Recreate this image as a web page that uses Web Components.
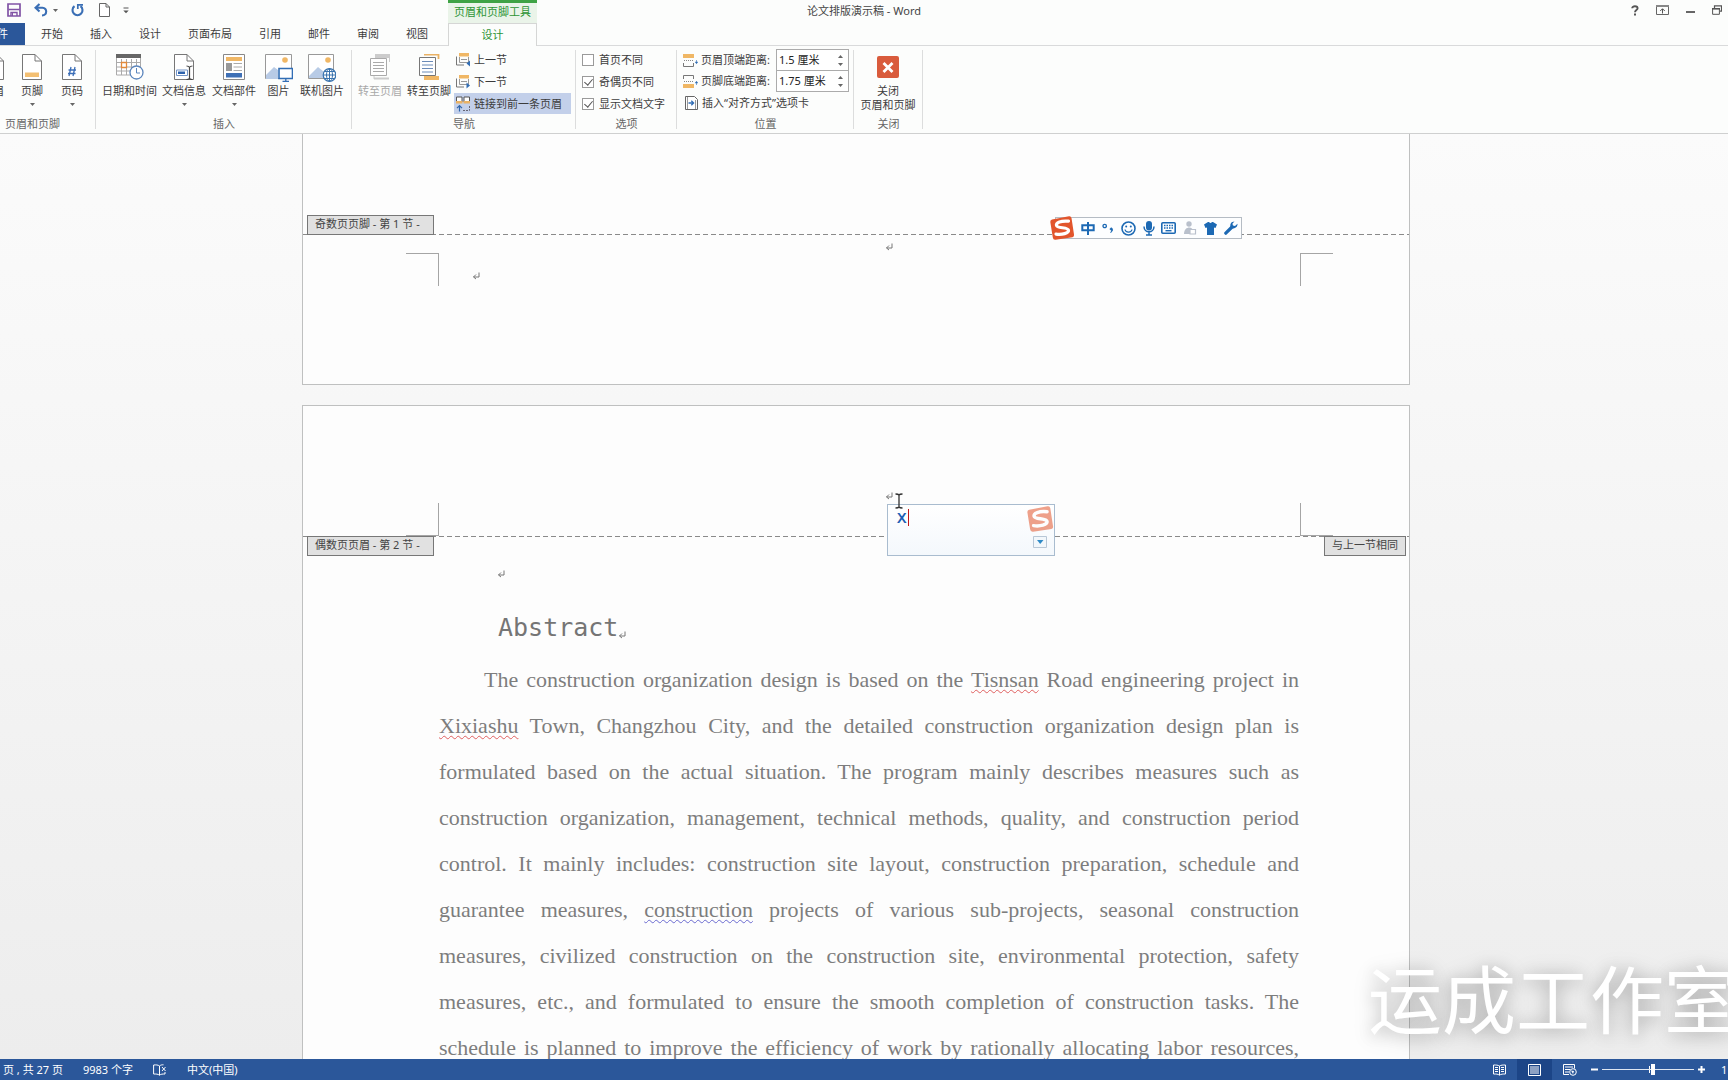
<!DOCTYPE html>
<html lang="zh-CN">
<head>
<meta charset="utf-8">
<title>论文排版演示稿 - Word</title>
<style>
html,body{margin:0;height:100%;overflow:hidden}
body{font:11px/14px "Noto Sans","Noto Sans CJK SC",sans-serif;color:#3c3c3c;background:#fcfdfc}
</style>
</head>
<body>
<word-app></word-app>
<script>
const ICONS = {
save:[14,14,'<path d="M1 1h12v12H1z" fill="none" stroke="#8053a5" stroke-width="1.7"/><path d="M1.5 6.5h11" stroke="#8053a5" stroke-width="1.5"/><path d="M4 13V9.500h6V13" fill="none" stroke="#8053a5" stroke-width="1.4"/><path d="M5.500 10v3" stroke="#8053a5"/>'],
undo:[14,14,'<path d="M5.500 1L1.500 4.800l4 3.800M2 4.800h6.500c5 0 5 7.500-.5 7.700" fill="none" stroke="#3a6fb5" stroke-width="2.100"/>'],
redo:[13,14,'<path d="M9.500 3.200A5 5 0 1 1 3.500 3.200" fill="none" stroke="#3a6fb5" stroke-width="2.100"/><path d="M6.800 6V1.800H12" fill="none" stroke="#3a6fb5" stroke-width="1.700"/>'],
blank:[11,14,'<path d="M.5.5h6.500l3.500 3.500v9.500H.5zM7 .5v3.500h3.500" fill="#fff" stroke="#666"/>'],
custom:[6,7,'<path d="M.5 1h5" stroke="#555"/><path d="M.3 3.500h5.400L3 6.300z" fill="#555"/>'],
down:[5,3,'<path d="M0 0h5L2.500 3z" fill="#666"/>'],
up:[5,3,'<path d="M0 3h5L2.500 0z" fill="#666"/>'],
help:[8,11,'<path d="M1.200 3.200C1.200.5 6.600.5 6.600 3.200c0 1.900-2.600 1.700-2.600 4.100" fill="none" stroke="#555" stroke-width="1.900"/><path d="M3 8.500h2v2H3z" fill="#555"/>'],
ribbonopt:[13,10,'<path d="M.5.5h12v9H.5z" fill="none" stroke="#666"/><path d="M0 0h13v2H0z" fill="#888"/><path d="M6.500 8.500V4M4.200 6l2.300-2.300L8.800 6" fill="none" stroke="#555"/>'],
min:[9,10,'<path d="M0 6h9v2H0z" fill="#666"/>'],
restore:[10,10,'<path d="M2.500 3V.8h7v5.400H8" fill="none" stroke="#555" stroke-width="1.200"/><path d="M.6 3.500h6.800v5.800H.6z" fill="none" stroke="#555"/><path d="M0 3h8v1.600H0z" fill="#555"/>'],
footer:[20,26,'<path d="M.5.5h12.500l6.500 6.500v18.500H.5z" fill="#fff" stroke="#777"/><path d="M13 .5V7h6.500" fill="none" stroke="#777"/><path d="M3 18.500h14v4.500H3z" fill="#f3bf72"/>'],
header:[20,26,'<path d="M.5.5h12.500l6.500 6.500v18.500H.5z" fill="#fff" stroke="#777"/><path d="M13 .5V7h6.500" fill="none" stroke="#777"/><path d="M3 3.500h8v4.500H3z" fill="#f3bf72"/>'],
pagenum:[20,26,'<path d="M.5.5h12.500l6.500 6.500v18.500H.5z" fill="#fff" stroke="#777"/><path d="M13 .5V7h6.500" fill="none" stroke="#777"/><path d="M9 13l-2 9M13 13l-2 9M6.500 16h7.500M6 19.500h7.500" stroke="#3d6fb8" stroke-width="1.300"/>'],
date:[28,26,'<path d="M.5 1h24v20H.5z" fill="#fff" stroke="#aaa"/><path d="M0 0h25v4H0z" fill="#666"/><path d="M5.500 5v16M10.500 5v16M15.500 5v16M20.500 5v16M1 8.500h23M1 13h23M1 17h23" stroke="#aaa"/><path d="M5.500 8.500h5v5h-5z" fill="#fff" stroke="#e28a3b" stroke-width="1.300"/><circle cx="20.500" cy="18.500" r="6.500" fill="#fff" stroke="#5c86bd" stroke-width="1.300"/><path d="M20.500 14v5h3.500" fill="none" stroke="#5c86bd"/>'],
docinfo:[20,26,'<path d="M.5.5h12.500l6.500 6.500v18.500H.5z" fill="#fff" stroke="#777"/><path d="M13 .5V7h6.500" fill="none" stroke="#777"/><path d="M2.500 16h11v5.500h-11z" fill="#fff" stroke="#7495c6"/><path d="M4 17.500h7V20H4z" fill="#2d62ac"/><path d="M12.500 12c1.500 0 2.500.5 3 1.300.5-.8 1.500-1.300 3-1.300M15.500 13v11.500M12.500 25.500c1.500 0 2.500-.5 3-1.300.5.8 1.500 1.300 3 1.300" fill="none" stroke="#444" stroke-width="1.200"/>'],
parts:[22,26,'<path d="M.5.5h21v25H.5z" fill="#fff" stroke="#888"/><path d="M3 3h16v4H3z" fill="#f0b765"/><path d="M3 9h6v8H3z" fill="#999"/><path d="M10.500 9.500H19M10.500 13H19M10.500 16.500H19" stroke="#aaa"/><path d="M3 19h16v4.500H3z" fill="#3e70b6"/>'],
picture:[28,28,'<path d="M.5.5h26v24H.5z" fill="#fff" stroke="#999"/><path d="M1 25l0-4 8-8 4 3v9z" fill="#b8cbe6"/><circle cx="20" cy="6" r="2.800" fill="#f0b765"/><path d="M14 14.500h13.500v10H14z" fill="#fff" stroke="#326eb5" stroke-width="1.600"/><path d="M20.800 25v2M17.500 27.300h6.500" stroke="#326eb5" stroke-width="1.300"/>'],
online:[28,28,'<path d="M.5.5h25v24H.5z" fill="#fff" stroke="#999"/><path d="M1 24v-2l9-9 6 5v6z" fill="#b8cbe6"/><circle cx="20" cy="6" r="2.800" fill="#f0b765"/><circle cx="21.500" cy="21" r="6.300" fill="#fff" stroke="#3973ae" stroke-width="1.200"/><ellipse cx="21.500" cy="21" rx="3" ry="6.300" fill="none" stroke="#3973ae"/><path d="M15 21h13M16.500 17.500h10M16.500 24.500h10M21.500 15v12" stroke="#3973ae"/>'],
gohead:[22,26,'<path d="M6 0h15v4H6z" fill="#ccc"/><path d="M1.500 4.500h16v17h-16z" fill="#fff" stroke="#aaa"/><path d="M20.500 4v4M5 22v3" fill="none" stroke="#ccc"/><path d="M4 8.500h11M4 11.500h11M4 14.500h11M4 17.500h11" stroke="#aaa"/><path d="M5 23.500h15v2H5z" fill="#ccc"/>'],
gofoot:[22,26,'<path d="M6 0.500h14.500V5" fill="none" stroke="#eab264" stroke-width="1.800"/><path d="M1.500 3.500h16v18h-16z" fill="#fff" stroke="#777"/><path d="M4 7.500h11M4 11h11M4 14.500h11M4 18h11" stroke="#6b8bb8"/><path d="M6 22h15v4H6z" fill="#f0b765"/>'],
prev:[14,14,'<path d="M3 0h10v3.500H3z" fill="#f0b765"/><path d="M.5 3.500V12H8" fill="none" stroke="#777"/><path d="M3.500 4v5.500h9V4M5 6.500h6" fill="none" stroke="#999"/><path d="M14 7.500v6L10.500 10.500z" fill="#326eb5"/>'],
next:[14,14,'<path d="M3 0h10v3.500H3z" fill="#f0b765"/><path d="M.5 3.500V12H8" fill="none" stroke="#777"/><path d="M3.500 4v5.500h9V4M5 6.500h6" fill="none" stroke="#999"/><path d="M10.500 7.500v6L14 10.500z" fill="#326eb5"/>'],
link:[14,16,'<path d="M.5 1h5.500v5H.5zM8 1h5.500v5H8z" fill="#fff" stroke="#555"/><path d="M0 5h6.500v2.500H0zM7.500 5H14v2.500H7.500z" fill="#eab264"/><path d="M3.500 15.500V10M1 12.200l2.500-2.500L6 12.200" fill="none" stroke="#2f65aa" stroke-width="1.200"/><path d="M7 14.500h6.500V10" fill="none" stroke="#667" stroke-dasharray="2 1"/>'],
top:[15,13,'<path d="M0 0h11v4H0z" fill="#f0b765"/><path d="M.5 9v3.500h10V9" fill="none" stroke="#777"/><path d="M1 6.500h9" stroke="#888" stroke-dasharray="1 1"/><path d="M13.500 6v3M12.300 8h2.400l-1.200 1.700z" stroke="#326eb5" fill="#326eb5" stroke-width=".6"/>'],
bottom:[15,13,'<path d="M0 9h11v4H0z" fill="#f0b765"/><path d="M.5 4V.5h10V4" fill="none" stroke="#777"/><path d="M1 6.500h9" stroke="#888" stroke-dasharray="1 1"/><path d="M13.500 7v3M12.300 8h2.400l-1.200-1.700z" stroke="#326eb5" fill="#326eb5" stroke-width=".6"/>'],
aligntab:[13,14,'<path d="M.5.5h9l3 3v10H.5z" fill="#fff" stroke="#666"/><path d="M2.500 1v12M10.500 4v9" stroke="#999"/><path d="M3.500 7H8.500M6.300 4.800L8.600 7 6.300 9.200" fill="none" stroke="#326eb5" stroke-width="1.300"/>'],
close:[22,22,'<rect width="22" height="22" rx="2" fill="#d95b3c"/><path d="M6.500 7l9 9M15.500 7l-9 9" stroke="#fff" stroke-width="2.800"/>'],
mark:[8,8,'<path d="M7 .5v4.500H1.500M4 2.500L1.500 5 4 7" fill="none" stroke="#777"/>'],
sogou:[26,26,'<path d="M3 4.500Q1 5 1.300 7l2.500 15.500Q4.200 25 6.500 24.700l17-2.500Q25.500 21.800 25 19.500L22.500 3Q22 .8 20 1.200z" fill="#e2552c"/><path d="M19.500 6.200C12 5.500 6.800 7.500 7.500 10.500c.7 3.200 11.500 1.300 12 4.800.4 3-6.500 4.700-12.500 3.800" fill="none" stroke="#fff" stroke-width="3.200" stroke-linecap="round"/>'],
zh:[14,13,'<path d="M1.300 3.300h11.400v5H1.300zM7 0v13" fill="none" stroke="#1c69b4" stroke-width="2"/>'],
punct:[12,10,'<circle cx="2.700" cy="3" r="1.700" fill="none" stroke="#1c69b4" stroke-width="1.300"/><path d="M8.500 9.500c2.500-1 2.500-4 1-4.500-1.500-.2-2 2-.2 2" fill="#1c69b4" stroke="#1c69b4"/>'],
smile:[15,15,'<circle cx="7.500" cy="7.500" r="6.500" fill="none" stroke="#1c69b4" stroke-width="1.600"/><path d="M4 8.500c.5 3.500 6.500 3.500 7 0" fill="none" stroke="#1c69b4" stroke-width="1.200"/><circle cx="5.200" cy="5.500" r="1" fill="#1c69b4"/><circle cx="9.800" cy="5.500" r="1" fill="#1c69b4"/>'],
mic:[12,15,'<rect x="3" y="0" width="6" height="9.500" rx="3" fill="#1c69b4"/><path d="M1 5.500c0 7 10 7 10 0M6 11v3M3 14h6" fill="none" stroke="#1c69b4" stroke-width="1.500"/>'],
keys:[15,12,'<rect x=".8" y=".8" width="13.400" height="10.400" rx="1" fill="#fff" stroke="#1c69b4" stroke-width="1.600"/><path d="M3 3.500h9.500M3 6h9.500" stroke="#1c69b4" stroke-width="1.400" stroke-dasharray="1.500 1"/><path d="M4.500 8.700h6" stroke="#1c69b4" stroke-width="1.400"/>'],
person:[14,14,'<circle cx="6" cy="3" r="2.700" fill="#b9c0cc"/><path d="M1 13c0-8 9-8 9-3v3z" fill="#b9c0cc"/><path d="M7 8.500h5.500V13H7z" fill="#fff" stroke="#b9c0cc" stroke-width="1.200"/>'],
shirt:[13,13,'<path d="M4 0h1c1 1.300 2 1.300 3 0h1l4 2.500-1.500 3.500-1.500-.5V13H3V5.500L1.500 6 0 2.500z" fill="#1c69b4"/>'],
wrench:[14,14,'<path d="M1.800 12.200L8 6" stroke="#1c69b4" stroke-width="3.200" stroke-linecap="round"/><path d="M10.500.5C7 .5 5.500 3.500 6.800 6.500c3 2.300 7 0 6.700-3.700L11 5 8.800 4.500 8.500 2.500z" fill="#1c69b4"/>'],
ibeam:[8,16,'<path d="M.5 1c2 0 3 .3 3.500 1C4.500 1.300 5.500 1 7.500 1M4 2v12M.5 15c2 0 3-.3 3.500-1 .5.700 1.500 1 3.500 1" fill="none" stroke="#333" stroke-width="1.300"/>'],
cand:[14,12,'<path d="M.5.5h13v11H.5z" fill="#f2f7fb" stroke="#b8c7d6"/><path d="M4 4h6.500L7.200 8z" fill="#2f8ac6"/>'],
proof:[14,12,'<path d="M6.500 2C5 .8 3 .8.600 1v9c2.400 0 4.400 0 5.900 1.200zM6.500 2C7.500 1 9 .7 10.500.800M6.500 11.200C8 10 9.500 10 12 10V8M9 3l3.500 4M12.500 3L9 7" fill="none" stroke="#fff"/>'],
read:[13,12,'<path d="M6.500 2C5 1 3 1 .5 1v9c2.500 0 4.500 0 6 1.200C8 10 10 10 12.500 10V1C10 1 8 1 6.500 2zv9M2 3.500h3M2 5.500h3M2 7.500h3M8 3.500h3M8 5.500h3M8 7.500h3" fill="none" stroke="#fff"/>'],
print:[13,12,'<path d="M.5.5h12v11H.5zM2 3h9M2 5h9M2 7h9M2 9h9" fill="none" stroke="#fff"/>'],
web:[14,12,'<path d="M6 10.500H.5V.5h11v4M2 3h8M2 5.500h5M2 8h4" fill="none" stroke="#fff"/><circle cx="10" cy="8" r="3.300" fill="#2b579a" stroke="#fff"/><path d="M8 6.500l3 .5-1 3z" fill="#fff"/>'],
minus:[7,7,'<path d="M0 3.500h7" stroke="#fff" stroke-width="2"/>'],
plus:[7,7,'<path d="M0 3.500h7M3.500 0v7" stroke="#fff" stroke-width="2"/>']
};
const svg = (n, s=1) => { const [w,h,b]=ICONS[n]; return `<svg width="${w*s}" height="${h*s}" viewBox="0 0 ${w} ${h}" aria-hidden="true">${b}</svg>`; };
const BASE = `*{box-sizing:border-box}svg{display:block;flex:none}button{font:inherit;color:inherit;background:none;border:0;padding:0;margin:0}`;
class Base extends HTMLElement {
  connectedCallback(){ if(!this.shadowRoot) this.attachShadow({mode:'open'}).innerHTML = `<style>${BASE}${this.css()}</style>${this.html()}`; }
  a(n){ return this.getAttribute(n) || ''; }
}
const define = (name, css, html) => customElements.define(name, class extends Base { css(){return css} html(){return html(this)} });

/* --- title bar and tabs --- */
define('title-bar', `
:host{display:grid;grid-template-columns:1fr auto 1fr;height:23px}
.left{display:flex}.quick{width:448px;display:flex;align-items:center;padding:0 0 3px 7px}
.quick button:nth-child(2){margin-left:13px}.quick button:nth-child(3){margin-left:5px}
.quick button:nth-child(4){margin-left:13px}.quick button:nth-child(5){margin-left:15px}.quick button:nth-child(6){margin-left:13px}
.ctx{width:89px;border-top:3px solid #3fa345;background:#eaf4e9;color:#2e9435;text-align:center;line-height:17px;white-space:nowrap}
h1{margin:0;font:inherit;line-height:22px;color:#444}
.win{display:flex;justify-content:flex-end;align-items:center;gap:17px;padding:0 6px 3px 0}`,
() => `<div class="left"><div class="quick">${[['save','保存'],['undo','撤消'],['down','更多'],['redo','重复'],['blank','新建'],['custom','自定义']].map(([i,l])=>`<button aria-label="${l}">${svg(i)}</button>`).join('')}</div><div class="ctx">页眉和页脚工具</div></div>
<h1>论文排版演示稿 - Word</h1>
<div class="win">${[['help','帮助'],['ribbonopt','功能区显示选项'],['min','最小化'],['restore','还原']].map(([i,l])=>`<button aria-label="${l}">${svg(i)}</button>`).join('')}</div>`);

define('ribbon-tabs', `
:host{display:flex;height:23px;border-bottom:1px solid #d9dadb}
.set{width:448px;display:flex;gap:27px;line-height:16px}
button{white-space:nowrap;align-self:stretch}
.file{width:25px;margin-right:-11px;background:#2b579a;color:#fff;display:flex;align-items:center;justify-content:flex-end;padding-right:17px;overflow:hidden}
.on{width:89px;border:1px solid #d5d6d5;border-bottom:0;background:#fcfdfc;color:#2e9435;margin-bottom:-1px;padding-bottom:1px}`,
() => `<div class="set"><button class="file">件</button>${['开始','插入','设计','页面布局','引用','邮件','审阅','视图'].map(t=>`<button>${t}</button>`).join('')}</div><button class="on">设计</button>`);

/* --- ribbon pieces --- */
define('ribbon-group', `
:host{display:flex;flex-direction:column;width:var(--w);height:87px;position:relative;padding:3px 0 0 var(--pad,4px)}
:host::after{content:"";position:absolute;right:0;top:4px;bottom:4px;width:1px;background:#dcdddd}
.body{display:flex;flex:1}
footer{margin:0 var(--cut,0px) 0 calc(0px - var(--pad,4px));height:18px;line-height:18px;text-align:center;color:#666}`,
e => `<div class="body"><slot></slot></div><footer>${e.a('label')}</footer>`);

define('ribbon-button', `
:host{display:block;width:var(--bw)}
button{width:100%;display:flex;flex-direction:column;align-items:center;white-space:nowrap;padding-top:5px}
.ic{height:30px}.ic.c{padding-top:2px}
.arrow{padding-top:5px}
:host([disabled]) button{color:#a8a8a8}
:host([cut]) button{align-items:flex-end;overflow:hidden}`,
e => `<button ${e.hasAttribute('disabled')?'disabled':''}><span class="ic ${e.a('icon')=='close'?'c':''}">${svg(e.a('icon'))}</span><span>${e.a('label')}</span>${e.a('sub')?`<span>${e.a('sub')}</span>`:''}${e.hasAttribute('menu')?`<span class="arrow">${svg('down')}</span>`:''}</button>`);

define('ribbon-row', `
:host{display:flex;height:21px}
button{display:flex;align-items:center;gap:4px;white-space:nowrap;flex:1;padding-left:2px}
:host([on]) button{background:#c3d0ea}`,
e => `<button>${svg(e.a('icon'))}<span>${e.a('label')}</span></button>`);

define('ribbon-check', `
:host{display:block;height:21px}
label{display:flex;align-items:center;gap:5px;height:21px;white-space:nowrap}
input{appearance:none;margin:0;width:12px;height:12px;border:1px solid #9a9a9a;background:#fff}
input:checked{display:grid;place-items:center}
input:checked::before{content:"";width:4px;height:7px;border:solid #555;border-width:0 1px 1px 0;transform:translateY(-1px) rotate(40deg)}`,
e => `<label><input type="checkbox" ${e.hasAttribute('checked')?'checked':''}>${e.a('label')}</label>`);

define('ribbon-spin', `
:host{display:flex;align-items:center;height:22px}
label{display:flex;align-items:center;gap:3px;width:93px;white-space:nowrap}
.box{width:73px;height:22px;border:1px solid #ababab;display:flex;background:#fff}
input{font:inherit;color:#222;border:0;background:none;outline:0;padding:0 0 0 2px;width:61px;min-width:0}
.sp{display:flex;flex-direction:column;justify-content:space-around;padding:2px 0}`,
e => `<label for="i">${svg(e.a('icon'))}${e.a('label')}</label><div class="box"><input id="i" type="text" value="${e.a('value')}"><div class="sp"><button aria-label="增加">${svg('up')}</button><button aria-label="减少">${svg('down')}</button></div></div>`);

define('word-ribbon', `
:host{display:flex;height:88px;border-bottom:1px solid #cfd0d0;background:#fcfdfc}
.rows{display:flex;flex-direction:column;gap:1px}
.spins{display:flex;flex-direction:column}
.spins ribbon-spin+ribbon-spin{margin-top:-1px}
.nav{width:117px}`,
() => `
<ribbon-group label="页眉和页脚" style="--w:96px;--pad:0px;--cut:31px">
<ribbon-button cut icon="header" label="眉" style="--bw:4px;margin-right:8px"></ribbon-button>
<ribbon-button menu icon="footer" label="页脚" style="--bw:40px"></ribbon-button>
<ribbon-button menu icon="pagenum" label="页码" style="--bw:40px"></ribbon-button></ribbon-group>
<ribbon-group label="插入" style="--w:256px">
<ribbon-button icon="date" label="日期和时间" style="--bw:59px"></ribbon-button>
<ribbon-button menu icon="docinfo" label="文档信息" style="--bw:50px"></ribbon-button>
<ribbon-button menu icon="parts" label="文档部件" style="--bw:50px"></ribbon-button>
<ribbon-button icon="picture" label="图片" style="--bw:39px"></ribbon-button>
<ribbon-button icon="online" label="联机图片" style="--bw:48px"></ribbon-button></ribbon-group>
<ribbon-group label="导航" style="--w:224px">
<ribbon-button disabled icon="gohead" label="转至页眉" style="--bw:48px"></ribbon-button>
<ribbon-button icon="gofoot" label="转至页脚" style="--bw:50px"></ribbon-button>
<div class="rows nav"><ribbon-row icon="prev" label="上一节"></ribbon-row><ribbon-row icon="next" label="下一节"></ribbon-row><ribbon-row on icon="link" label="链接到前一条页眉"></ribbon-row></div></ribbon-group>
<ribbon-group label="选项" style="--w:101px;--pad:6px"><div class="rows"><ribbon-check label="首页不同"></ribbon-check><ribbon-check checked label="奇偶页不同"></ribbon-check><ribbon-check checked label="显示文档文字"></ribbon-check></div></ribbon-group>
<ribbon-group label="位置" style="--w:177px;--pad:6px"><div class="spins"><ribbon-spin icon="top" label="页眉顶端距离:" value="1.5 厘米"></ribbon-spin><ribbon-spin icon="bottom" label="页脚底端距离:" value="1.75 厘米"></ribbon-spin><ribbon-row icon="aligntab" label="插入“对齐方式”选项卡"></ribbon-row></div></ribbon-group>
<ribbon-group label="关闭" style="--w:69px;--pad:0px"><ribbon-button icon="close" label="关闭" sub="页眉和页脚" style="--bw:68px"></ribbon-button></ribbon-group>`);

/* --- document --- */
define('section-tag', `
:host{display:block;height:20px;border:1px solid #777;background:#e1e1e1;color:#444;line-height:16px;padding:0 7px;white-space:nowrap}
:host([wide]){width:127px}`,
() => `<slot></slot>`);

define('doc-page', `
:host{display:block;width:1108px;max-width:100%;border:1px solid #bfc0c0;background:#fdfdfd;flex:none}`,
() => `<slot></slot>`);

define('text-line', `
:host{display:block;text-align:justify;text-align-last:justify;white-space:nowrap}
:host([first]){padding-left:45px}
::slotted(u){text-decoration:underline wavy #e06060 1px;text-underline-offset:2px}
::slotted(u.g){text-decoration-color:#6a6ad0}`,
() => `<slot></slot>`);

define('ime-bar', `
:host{display:flex;align-items:center;position:absolute;z-index:2;height:26px}
.logo{z-index:1;margin-right:-20px}
.tools{display:flex;align-items:center;justify-content:space-between;width:187px;height:22px;border:1px solid #b5bcc4;background:#fdfeff;padding:0 3px 0 25px}`,
() => `<span class="logo">${svg('sogou')}</span><div class="tools">${[['zh','中文'],['punct','标点'],['smile','表情'],['mic','语音'],['keys','软键盘'],['person','登录'],['shirt','皮肤'],['wrench','工具']].map(([i,l])=>`<button aria-label="${l}">${svg(i)}</button>`).join('')}</div>`);

define('ime-candidate', `
:host{display:flex;justify-content:space-between;position:absolute;z-index:2;width:168px;height:52px;border:1px solid #a9bccf;background:linear-gradient(#fff,#f4f8fc)}
.t{padding:2px 0 0 9px;font:600 15px/20px "Noto Sans",sans-serif;color:#1f5fb4;display:flex}
.t i{width:1px;height:17px;margin:2px 0 0 1px;background:#c01818}
.r{display:flex;flex-direction:column;align-items:center;gap:3px}.r span{opacity:.55}`,
() => `<div class="t">X<i></i></div><div class="r"><span>${svg('sogou',1.08)}</span><button aria-label="展开">${svg('cand')}</button></div>`);

define('doc-canvas', `
:host{display:flex;flex-direction:column;align-items:center;gap:20px;flex:1;min-height:0;overflow:hidden;position:relative;padding-right:16px;background:linear-gradient(#fbfbfb,#ededed)}
.p1{height:251px;border-top:0;padding-top:81px}
.tags{display:flex;justify-content:space-between;padding:0 3px 0 4px;position:relative}
.rule{height:1px;background:repeating-linear-gradient(90deg,#8a8a8a 0 5px,#fdfdfd 5px 8px)}
.p1 .rule,.p2 .tags{margin-top:-1px}
.frame{display:flex;height:33px;padding:0 76px 0 103px}
.frame i{width:33px;border:0 solid #a5a5a5}
.frame .l{border-right-width:1px}.frame .r{border-left-width:1px}
.p1 .frame i{border-top-width:1px}.p2 .frame i{border-bottom-width:1px}
.frame div{flex:1;padding:19px 0 0 33px}
.mid{display:flex;justify-content:center;padding-left:66px}
.p1 .mid{height:18px;padding-top:8px}
.p2 .mid{height:97px;padding-top:86px}
.text{margin:0 110px 0 136px;color:#7d7d7d;font:22px/46px "Liberation Serif",serif}
.blank{height:36px;padding:14px 0 0 58px}
h2{margin:0;height:65px;padding:7px 0 0 59px;font:400 25px/58px "DejaVu Sans Mono",monospace;color:#757575;display:flex;align-items:center}
h2 svg{margin-top:13px}
.over{position:absolute}
.wm{position:absolute;right:-10px;bottom:18px;font:74px/90px "Noto Sans CJK SC",sans-serif;color:#fff;white-space:nowrap;text-shadow:0 2px 16px rgba(0,0,0,.2),0 3px 24px rgba(0,0,0,.2)}`,
() => { const L = [
'The construction organization design is based on the <u>Tisnsan</u> Road engineering project in',
'<u>Xixiashu</u> Town, Changzhou City, and the detailed construction organization design plan is',
'formulated based on the actual situation. The program mainly describes measures such as',
'construction organization, management, technical methods, quality, and construction period',
'control. It mainly includes: construction site layout, construction preparation, schedule and',
'guarantee measures, <u class="g">construction</u> projects of various sub-projects, seasonal construction',
'measures, civilized construction on the construction site, environmental protection, safety',
'measures, etc., and formulated to ensure the smooth completion of construction tasks. The',
'schedule is planned to improve the efficiency of work by rationally allocating labor resources,'];
return `<doc-page class="p1"><div class="tags"><section-tag wide>奇数页页脚 - 第 1 节 -</section-tag></div><div class="rule"></div><div class="mid">${svg('mark')}</div><div class="frame"><i class="l"></i><div>${svg('mark')}</div><i class="r"></i></div></doc-page>
<doc-page class="p2"><div class="mid">${svg('mark')}</div><div class="frame"><i class="l"></i><div></div><i class="r"></i></div><div class="rule"></div><div class="tags"><section-tag wide>偶数页页眉 - 第 2 节 -</section-tag><section-tag>与上一节相同</section-tag></div>
<div class="text"><div class="blank">${svg('mark')}</div><h2>Abstract${svg('mark')}</h2>${L.map((t,i)=>`<text-line ${i?'':'first'}>${t}</text-line>`).join('')}</div></doc-page>
<ime-bar style="left:1049px;top:81px"></ime-bar><ime-candidate style="left:887px;top:370px"></ime-candidate>
<span class="over" style="left:895px;top:359px;z-index:3">${svg('ibeam')}</span><div class="wm">运成工作室</div>`; });

define('status-bar', `
:host{display:flex;align-items:stretch;height:21px;background:#2b579a;color:#fff;overflow:hidden}
div{display:flex;align-items:center}
.l{gap:20px;padding-left:3px;white-space:nowrap;flex:1}
.v button{display:flex;align-items:center;justify-content:center;width:35px;height:21px}
.v .on{background:#1c4587}
.z{padding-left:4px}
input{appearance:none;width:92px;height:11px;margin:0 4px;background:linear-gradient(#dfe7f2,#dfe7f2) 0 5px/100% 1px no-repeat,linear-gradient(#fff,#fff) 47px 2px/1px 7px no-repeat}
input::-webkit-slider-thumb{appearance:none;width:4px;height:11px;background:#fff}
.pct{width:23px;padding-left:16px}`,
() => `<div class="l"><span>页 , 共 27 页</span><span>9983 个字</span>${svg('proof')}<span>中文(中国)</span></div>
<div class="v"><button aria-label="阅读视图">${svg('read')}</button><button class="on" aria-label="页面视图">${svg('print')}</button><button aria-label="Web 版式视图">${svg('web')}</button></div>
<div class="z"><button aria-label="缩小">${svg('minus')}</button><input type="range" aria-label="缩放" value="56"><button aria-label="放大">${svg('plus')}</button><span class="pct">1</span></div>`);

define('word-app', `:host{display:flex;flex-direction:column;height:100vh;overflow:hidden}`,
() => `<title-bar></title-bar><ribbon-tabs></ribbon-tabs><word-ribbon></word-ribbon><doc-canvas></doc-canvas><status-bar></status-bar>`);
</script>
</body>
</html>
